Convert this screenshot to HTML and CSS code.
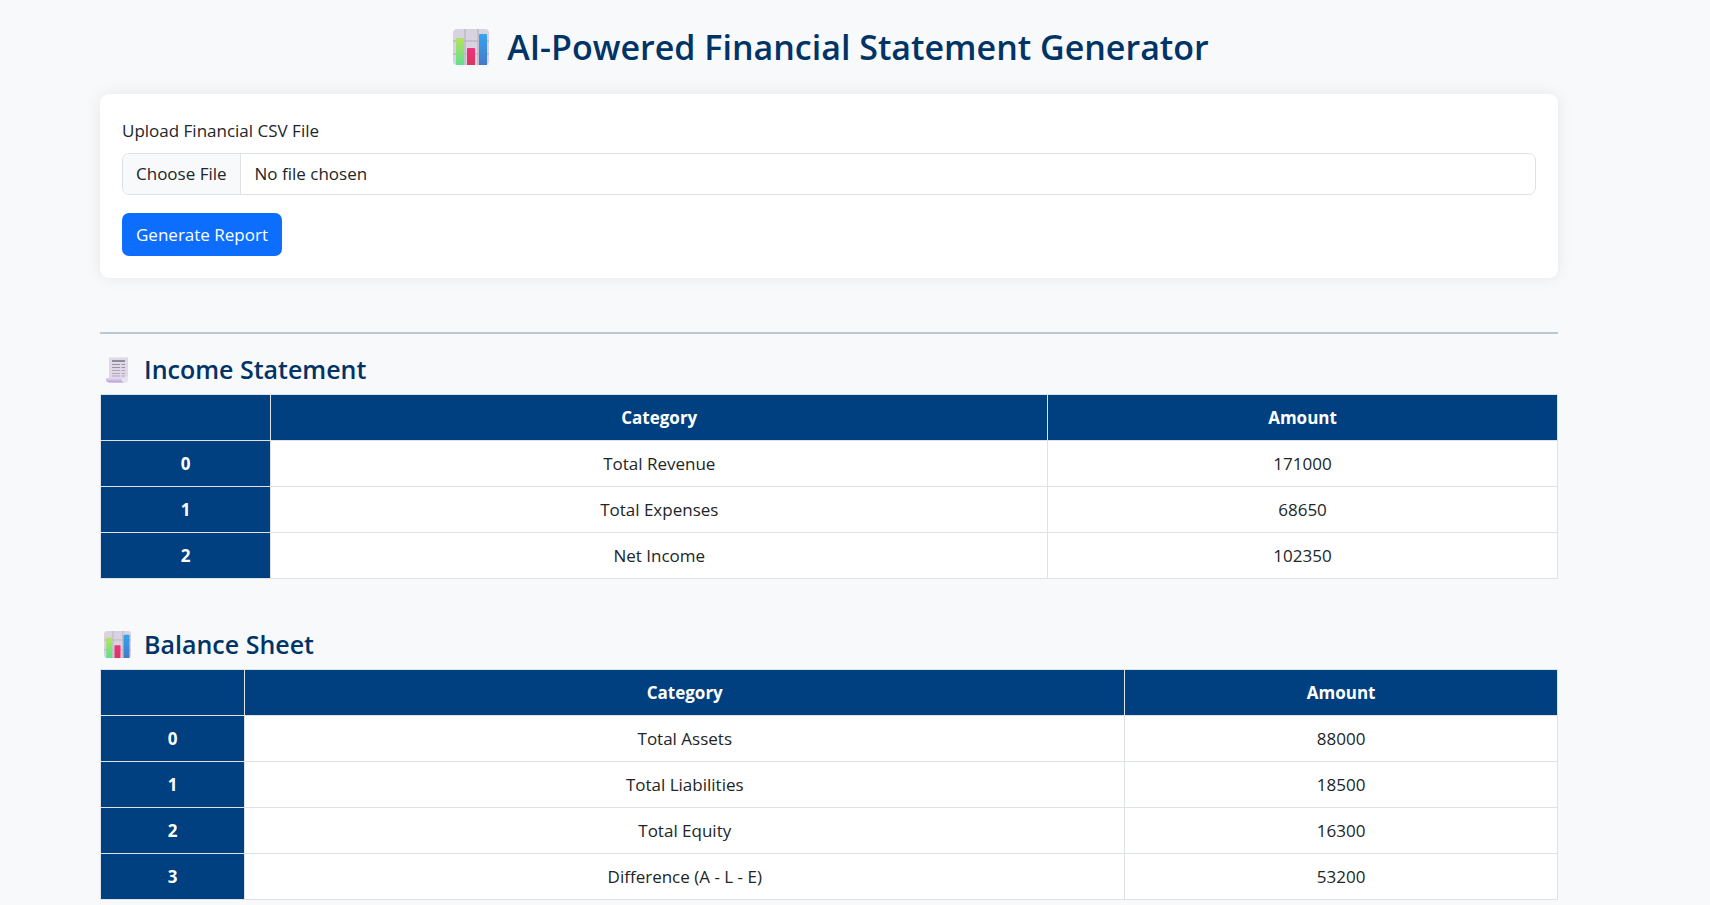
FILE: index.html
```html
<!DOCTYPE html>
<html lang="en">
<head>
<meta charset="utf-8">
<title>AI-Powered Financial Statement Generator</title>
<link rel="stylesheet" href="styles.css">
</head>
<body>
<svg class="sprite" width="0" height="0" aria-hidden="true">
  <defs>
    <linearGradient id="green" x1="0" y1="0" x2="0" y2="1"><stop offset="0" stop-color="#b4e35a"/><stop offset="1" stop-color="#5fe08f"/></linearGradient>
    <linearGradient id="pink" x1="0" y1="0" x2="0" y2="1"><stop offset="0" stop-color="#f0307f"/><stop offset="1" stop-color="#d8385e"/></linearGradient>
    <linearGradient id="blue" x1="0" y1="0" x2="0" y2="1"><stop offset="0" stop-color="#33a5f2"/><stop offset="1" stop-color="#4479c9"/></linearGradient>
    <linearGradient id="roll" x1="0" y1="0" x2="0" y2="1"><stop offset="0" stop-color="#e2daf0"/><stop offset="1" stop-color="#b79bd6"/></linearGradient>
    <symbol id="chart" viewBox="0 0 36 36">
      <rect width="36" height="36" rx="4" fill="#d9d2e1"/>
      <path d="M12 0v36M25 0v36M0 12h36M0 25h36" stroke="#bdb7c5" stroke-width="1.4"/>
      <path d="M3 36V10a1 1 0 0 1 1-1h6a1 1 0 0 1 1 1v26z" fill="url(#green)"/>
      <path d="M14 36V20a1 1 0 0 1 1-1h6a1 1 0 0 1 1 1v16z" fill="url(#pink)"/>
      <path d="M26 36V6a1 1 0 0 1 1-1h6a1 1 0 0 1 1 1v30z" fill="url(#blue)"/>
    </symbol>
    <symbol id="receipt" viewBox="-1 0 27 27">
      <path d="M4 1l1.500 1 1.500-1 1.500 1 1.500-1 1.500 1 1.500-1 1.500 1 1.500-1 1.500 1 1.500-1 1.500 1 1.500-1L23 1v22a3.500 3.500 0 0 1-3.500 3.500H7L4 23z" fill="#ded8e8"/>
      <path d="M1 22h15.500a3.500 3.500 0 0 0 3.500 4.500H4.500A3.500 3.500 0 0 1 1 22z" fill="url(#roll)"/>
      <path d="M16.500 22h3v-1.500H23V23a3.500 3.500 0 0 1-3.500 3.500 3.500 3.500 0 0 1-3-4.500z" fill="#e9e2f0"/>
      <path d="M7 5h13" stroke="#918b9b" stroke-width="2"/>
      <path d="M7 8.500h8M16.500 8.500H20M7 11.500h8M16.500 11.500H20" stroke="#99929f" stroke-width="1.200"/>
      <path d="M7 14.500h8M16.500 14.500H20M7 17.500h8M16.500 17.500H20M7 20h8M16.500 20H20" stroke="#b1a9b9" stroke-width="1.200"/>
    </symbol>
  </defs>
</svg>
<main class="page">
  <h1 class="title"><svg class="title-icon" aria-hidden="true"><use href="#chart"/></svg>AI-Powered Financial Statement Generator</h1>
  <form class="card">
    <label class="label" for="csv">Upload Financial CSV File</label>
    <input class="file" type="file" id="csv" accept=".csv">
    <button class="submit" type="button">Generate Report</button>
  </form>
  <hr class="rule">
  <section class="report">
    <h2 class="heading"><svg class="heading-icon" aria-hidden="true"><use href="#receipt"/></svg>Income Statement</h2>
    <table class="table income">
      <thead><tr><th class="index"></th><th>Category</th><th class="amount">Amount</th></tr></thead>
      <tbody>
        <tr><th>0</th><td>Total Revenue</td><td>171000</td></tr>
        <tr><th>1</th><td>Total Expenses</td><td>68650</td></tr>
        <tr><th>2</th><td>Net Income</td><td>102350</td></tr>
      </tbody>
    </table>
  </section>
  <section class="report">
    <h2 class="heading"><svg class="heading-icon" aria-hidden="true"><use href="#chart"/></svg>Balance Sheet</h2>
    <table class="table balance">
      <thead><tr><th class="index"></th><th>Category</th><th class="amount">Amount</th></tr></thead>
      <tbody>
        <tr><th>0</th><td>Total Assets</td><td>88000</td></tr>
        <tr><th>1</th><td>Total Liabilities</td><td>18500</td></tr>
        <tr><th>2</th><td>Total Equity</td><td>16300</td></tr>
        <tr><th>3</th><td>Difference (A - L - E)</td><td>53200</td></tr>
      </tbody>
    </table>
  </section>
</main>
</body>
</html>
```
FILE: styles.css
```css
*, *::before, *::after { box-sizing: border-box; }

body {
  margin: 0;
  background: #f8f9fb;
  color: #212529;
  font: 17px/26px "Segoe UI", "Open Sans", sans-serif;
}

.sprite { position: absolute; }

.page { padding: 26px 152px 0 100px; }

.title,
.heading {
  display: flex;
  align-items: center;
  margin: 0;
  padding-left: 4px;
  color: #003366;
  font-weight: 600;
}

.title {
  justify-content: center;
  gap: 18px;
  margin-bottom: 26px;
  font-size: 34px;
  line-height: 42px;
}

.title-icon { width: 36px; height: 36px; }

.card {
  display: flex;
  flex-direction: column;
  align-items: flex-start;
  padding: 22px;
  border-radius: 9px;
  background: #fff;
  box-shadow: 0 0 16px rgba(0, 0, 0, 0.08);
}

.label { margin: 2px 0 9px; }

.file {
  width: 100%;
  height: 42px;
  padding: 7px 13px;
  overflow: hidden;
  border: 1px solid #dee2e6;
  border-radius: 7px;
  background: #fff;
  color: #212529;
  font: inherit;
}

.file::file-selector-button {
  height: 40px;
  margin: -7px 14px -7px -13px;
  padding: 7px 13px;
  border: 0 solid #dee2e6;
  border-right-width: 1px;
  background: #f8f9fa;
  color: #212529;
  font: inherit;
}

.submit {
  height: 43px;
  margin-top: 18px;
  padding: 0 14px;
  border: 0;
  border-radius: 7px;
  background: #0d6efd;
  color: #fff;
  font: inherit;
}

.rule {
  height: 2px;
  margin: 54px 0 18px;
  border: 0;
  background: #bac8d6;
}

.report { margin-bottom: 48px; }

.heading {
  gap: 13px;
  margin-bottom: 8px;
  font-size: 25px;
  line-height: 34px;
}

.heading-icon { width: 27px; height: 27px; }

.table {
  width: 100%;
  border-collapse: collapse;
  table-layout: fixed;
  background: #fff;
  text-align: center;
}

.table th,
.table td {
  height: 46px;
  padding: 9px;
  border: 1px solid #dee2e6;
}

.table th {
  background: #004080;
  color: #fff;
  font-weight: 700;
}

.income .index { width: 11.7%; }
.income .amount { width: 35%; }
.balance .index { width: 9.9%; }
.balance .amount { width: 29.7%; }
```
